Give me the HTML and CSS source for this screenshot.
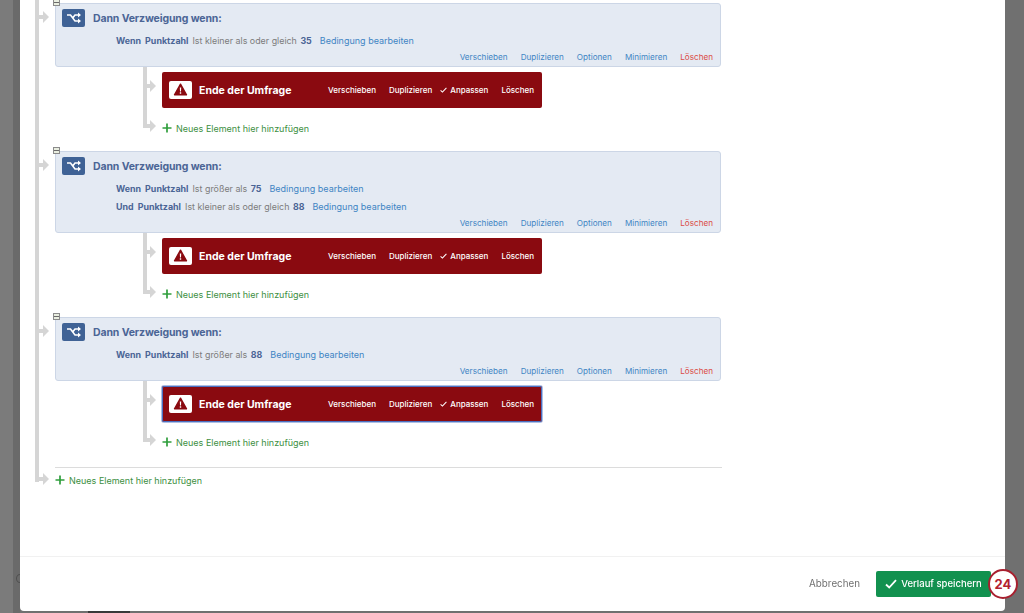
FILE: index.html
```html
<!DOCTYPE html>
<html lang="de">
<head>
<meta charset="utf-8">
<title>Verlauf</title>
<link rel="stylesheet" href="styles.css">
</head>
<body>
<svg class="sprites" width="0" height="0" aria-hidden="true">
  <symbol id="branch" viewBox="0 0 23 18">
    <path d="M5 6h3.500l4.500 6h3.500M10.700 9 13 6h3.500" fill="none" stroke="#fff" stroke-width="1.600"/>
    <path d="M16 3.600 19 6l-3 2.400zM16 9.600l3 2.400-3 2.400z" fill="#fff"/>
  </symbol>
  <symbol id="warn" viewBox="0 0 23 18">
    <path d="M11.500 3.200 17.500 13.800h-12z" fill="#8a0a10" stroke="#8a0a10" stroke-width="1.400" stroke-linejoin="round"/>
    <path d="M10.800 6.500h1.400l-.2 4h-1zM10.800 11.300h1.400v1.400h-1.400z" fill="#fff"/>
  </symbol>
  <symbol id="plus" viewBox="0 0 10 10">
    <path d="M5 .5v9M.5 5h9" stroke="#2f9e3c" stroke-width="1.700" fill="none"/>
  </symbol>
  <symbol id="check" viewBox="0 0 12 10">
    <path d="M1 5.500 4.200 8.500 11 1.200" fill="none" stroke="currentColor" stroke-width="1.800"/>
  </symbol>
</svg>

<span class="behind-mark"></span>
<span class="behind-bar"></span>

<main class="modal">
  <div class="modal-body">
    <div class="tree">
      <section class="branch">
        <span class="toggle"></span>
        <div class="panel">
          <div class="panel-head"><svg class="icon"><use href="#branch"/></svg><h2 class="panel-title">Dann Verzweigung wenn:</h2></div>
          <p class="cond"><b>Wenn</b> <b>Punktzahl</b> <span class="op">Ist kleiner als oder gleich</span> <b>35</b> <a class="edit">Bedingung bearbeiten</a></p>
          <div class="panel-actions"><a>Verschieben</a><a>Duplizieren</a><a>Optionen</a><a>Minimieren</a><a class="danger">Löschen</a></div>
        </div>
        <div class="children">
          <div class="end">
            <svg class="icon-end"><use href="#warn"/></svg><strong class="end-title">Ende der Umfrage</strong>
            <div class="end-actions"><a>Verschieben</a><a>Duplizieren</a><a class="adjust"><svg class="tick"><use href="#check"/></svg>Anpassen</a><a>Löschen</a></div>
          </div>
          <div class="add"><svg class="plus"><use href="#plus"/></svg>Neues Element hier hinzufügen</div>
        </div>
      </section>

      <section class="branch">
        <span class="toggle"></span>
        <div class="panel">
          <div class="panel-head"><svg class="icon"><use href="#branch"/></svg><h2 class="panel-title">Dann Verzweigung wenn:</h2></div>
          <p class="cond"><b>Wenn</b> <b>Punktzahl</b> <span class="op">Ist größer als</span> <b>75</b> <a class="edit">Bedingung bearbeiten</a></p>
          <p class="cond"><b>Und</b> <b>Punktzahl</b> <span class="op">Ist kleiner als oder gleich</span> <b>88</b> <a class="edit">Bedingung bearbeiten</a></p>
          <div class="panel-actions"><a>Verschieben</a><a>Duplizieren</a><a>Optionen</a><a>Minimieren</a><a class="danger">Löschen</a></div>
        </div>
        <div class="children">
          <div class="end">
            <svg class="icon-end"><use href="#warn"/></svg><strong class="end-title">Ende der Umfrage</strong>
            <div class="end-actions"><a>Verschieben</a><a>Duplizieren</a><a class="adjust"><svg class="tick"><use href="#check"/></svg>Anpassen</a><a>Löschen</a></div>
          </div>
          <div class="add"><svg class="plus"><use href="#plus"/></svg>Neues Element hier hinzufügen</div>
        </div>
      </section>

      <section class="branch">
        <span class="toggle"></span>
        <div class="panel">
          <div class="panel-head"><svg class="icon"><use href="#branch"/></svg><h2 class="panel-title">Dann Verzweigung wenn:</h2></div>
          <p class="cond"><b>Wenn</b> <b>Punktzahl</b> <span class="op">Ist größer als</span> <b>88</b> <a class="edit">Bedingung bearbeiten</a></p>
          <div class="panel-actions"><a>Verschieben</a><a>Duplizieren</a><a>Optionen</a><a>Minimieren</a><a class="danger">Löschen</a></div>
        </div>
        <div class="children">
          <div class="end selected">
            <svg class="icon-end"><use href="#warn"/></svg><strong class="end-title">Ende der Umfrage</strong>
            <div class="end-actions"><a>Verschieben</a><a>Duplizieren</a><a class="adjust"><svg class="tick"><use href="#check"/></svg>Anpassen</a><a>Löschen</a></div>
          </div>
          <div class="add"><svg class="plus"><use href="#plus"/></svg>Neues Element hier hinzufügen</div>
        </div>
      </section>

      <div class="tree-foot">
        <div class="add"><svg class="plus"><use href="#plus"/></svg>Neues Element hier hinzufügen</div>
      </div>
    </div>
  </div>

  <footer class="modal-foot">
    <a class="cancel">Abbrechen</a>
    <button class="save" type="button"><svg class="save-check"><use href="#check"/></svg>Verlauf speichern</button>
    <span class="badge">24</span>
  </footer>
</main>
</body>
</html>
```

FILE: styles.css
```css
* { box-sizing: border-box; }

html, body { margin: 0; height: 613px; overflow: hidden; }

body {
  background: linear-gradient(to right, #7b7b7b 0, #7b7b7b 13px, #6a6a6a 13px, #6a6a6a 20px, #707070 20px);
  font-family: "Inter", "Liberation Sans", sans-serif;
  color: #4a4a4a;
}

.sprites { position: absolute; }

.behind-mark {
  position: absolute;
  left: 16px;
  top: 574px;
  width: 8px;
  height: 9px;
  border: 1px solid #505050;
  border-radius: 50%;
}
.behind-bar {
  position: absolute;
  left: 88px;
  top: 611px;
  width: 42px;
  height: 2px;
  background: #3a3a3a;
}

.modal {
  position: relative;
  width: 985px;
  height: 611px;
  margin-left: 20px;
  background: #fff;
  border-radius: 0 0 4px 4px;
  display: flex;
  flex-direction: column;
  filter: blur(.35px);
}

.modal-body { height: 556px; overflow: hidden; padding: 0 0 0 15px; }

.tree { position: relative; width: 687px; height: 482px; border-left: 4px solid #d5d5d5; padding: 3px 0 0 16px; }

/* branch */
.branch { position: relative; margin-bottom: 13px; }
.branch:last-of-type { margin-bottom: 0; }

.branch::before,
.tree-foot::before {
  content: "";
  position: absolute;
  left: -16px;
  top: 12px;
  width: 4px;
  height: 4px;
  background: #d5d5d5;
}
.branch::after,
.tree-foot::after {
  content: "";
  position: absolute;
  left: -12px;
  top: 8px;
  border-left: 6px solid #d5d5d5;
  border-top: 6px solid transparent;
  border-bottom: 6px solid transparent;
}

.toggle {
  position: absolute;
  left: -2px;
  top: -4px;
  z-index: 1;
  width: 7px;
  height: 7px;
  background: #e9eee0 linear-gradient(#6b6b6b, #6b6b6b) center / 5px 1px no-repeat;
  border: 1px solid #8b8b8b;
}

.panel {
  background: #e4eaf3;
  border: 1px solid #ccd6e6;
  border-radius: 3px;
  width: 666px;
  padding: 5px 7px 1px 6px;
}

.panel-head { display: flex; align-items: center; height: 18px; gap: 8px; margin-bottom: 5px; }

.icon { width: 23px; height: 18px; background: #3f6295; border-radius: 2px; flex: none; }

.panel-title {
  margin: 0;
  font-size: 10.500px;
  font-weight: 700;
  color: #4b6596;
  letter-spacing: -.12px;
}

.cond {
  margin: 0;
  height: 18px;
  line-height: 18px;
  padding-left: 54px;
  font-size: 8.900px;
  white-space: nowrap;
}
.cond b { color: #4b6596; font-weight: 700; margin-right: 1.500px; }
.op { color: #7c7c7c; margin-right: 1px; }
.edit { color: #3f85c4; margin-left: 4px; font-size: 9px; }

.panel-actions {
  display: flex;
  justify-content: flex-end;
  gap: 13px;
  height: 14px;
  line-height: 13px;
  font-size: 8.150px;
  color: #3f85c4;
  margin-top: 1px;
}
.danger { color: #db4a45; }

/* children */
.children {
  position: relative;
  margin-left: 88px;
  padding: 5px 0 0 19px;
  height: 71px;
}
.children::before {
  content: "";
  position: absolute;
  left: 0;
  top: 0;
  width: 4px;
  height: 61px;
  background: #d5d5d5;
}

.end {
  position: relative;
  display: flex;
  align-items: center;
  width: 380px;
  height: 36px;
  padding: 0 8px 0 7px;
  background: #8a0a10;
  border-radius: 2px;
  color: #fff;
}
.end::before {
  content: "";
  position: absolute;
  left: -15px;
  top: 12px;
  width: 4px;
  height: 4px;
  background: #d5d5d5;
}
.end::after {
  content: "";
  position: absolute;
  left: -12px;
  top: 8px;
  border-left: 6px solid #d5d5d5;
  border-top: 6px solid transparent;
  border-bottom: 6px solid transparent;
}
.selected { box-shadow: inset 0 0 0 1px #4a6fc0, 0 0 0 1px rgba(74, 111, 192, .45); }

.icon-end { width: 23px; height: 18px; background: #fff; border-radius: 2px; flex: none; }
.end-title { margin-left: 7px; font-size: 10.500px; font-weight: 700; white-space: nowrap; }

.end-actions {
  margin-left: auto;
  display: flex;
  gap: 13px;
  font-size: 8px;
  font-weight: 500;
}
.adjust { display: flex; align-items: center; margin-left: -5px; }
.tick { width: 7px; height: 6px; margin-right: 3px; color: #fff; }

.add {
  display: flex;
  align-items: center;
  height: 20px;
  margin-top: 10px;
  font-size: 9px;
  color: #3d8f3f;
  white-space: nowrap;
}
.plus { width: 10px; height: 10px; margin-right: 4px; flex: none; }

.children > .add { position: relative; }
.children > .add::before {
  content: "";
  position: absolute;
  left: -15px;
  top: 6px;
  width: 4px;
  height: 4px;
  background: #d5d5d5;
}
.children > .add::after {
  content: "";
  position: absolute;
  left: -12px;
  top: 2px;
  border-left: 6px solid #d5d5d5;
  border-top: 6px solid transparent;
  border-bottom: 6px solid transparent;
}

.tree-foot {
  position: relative;
  margin-top: 15px;
  width: 667px;
  border-top: 1px solid #dcdcdc;
}
.tree-foot .add { margin-top: 2px; }
.tree-foot::before { top: 9px; }
.tree-foot::after { top: 5px; }

/* footer */
.modal-foot {
  position: relative;
  flex: 1;
  display: flex;
  align-items: center;
  justify-content: flex-end;
  border-top: 1px solid #f1f1f1;
  padding: 0 14px 1px 0;
}
.cancel { font-size: 9.800px; color: #6f6f6f; margin-right: 16px; }
.save {
  display: flex;
  align-items: center;
  justify-content: center;
  width: 115px;
  height: 26px;
  padding: 0;
  border: 0;
  border-radius: 2px;
  background: #12914f;
  color: #fff;
  font: 500 9.500px "Inter", "Liberation Sans", sans-serif;
}
.save-check { width: 12px; height: 10px; margin-right: 4px; color: #fff; }
.badge {
  position: absolute;
  right: -13px;
  top: 12px;
  width: 30px;
  height: 30px;
  display: flex;
  align-items: center;
  justify-content: center;
  border: 2px solid #a8202f;
  border-radius: 50%;
  background: #fff;
  color: #b3202f;
  font-size: 13px;
  font-weight: 700;
}
```
